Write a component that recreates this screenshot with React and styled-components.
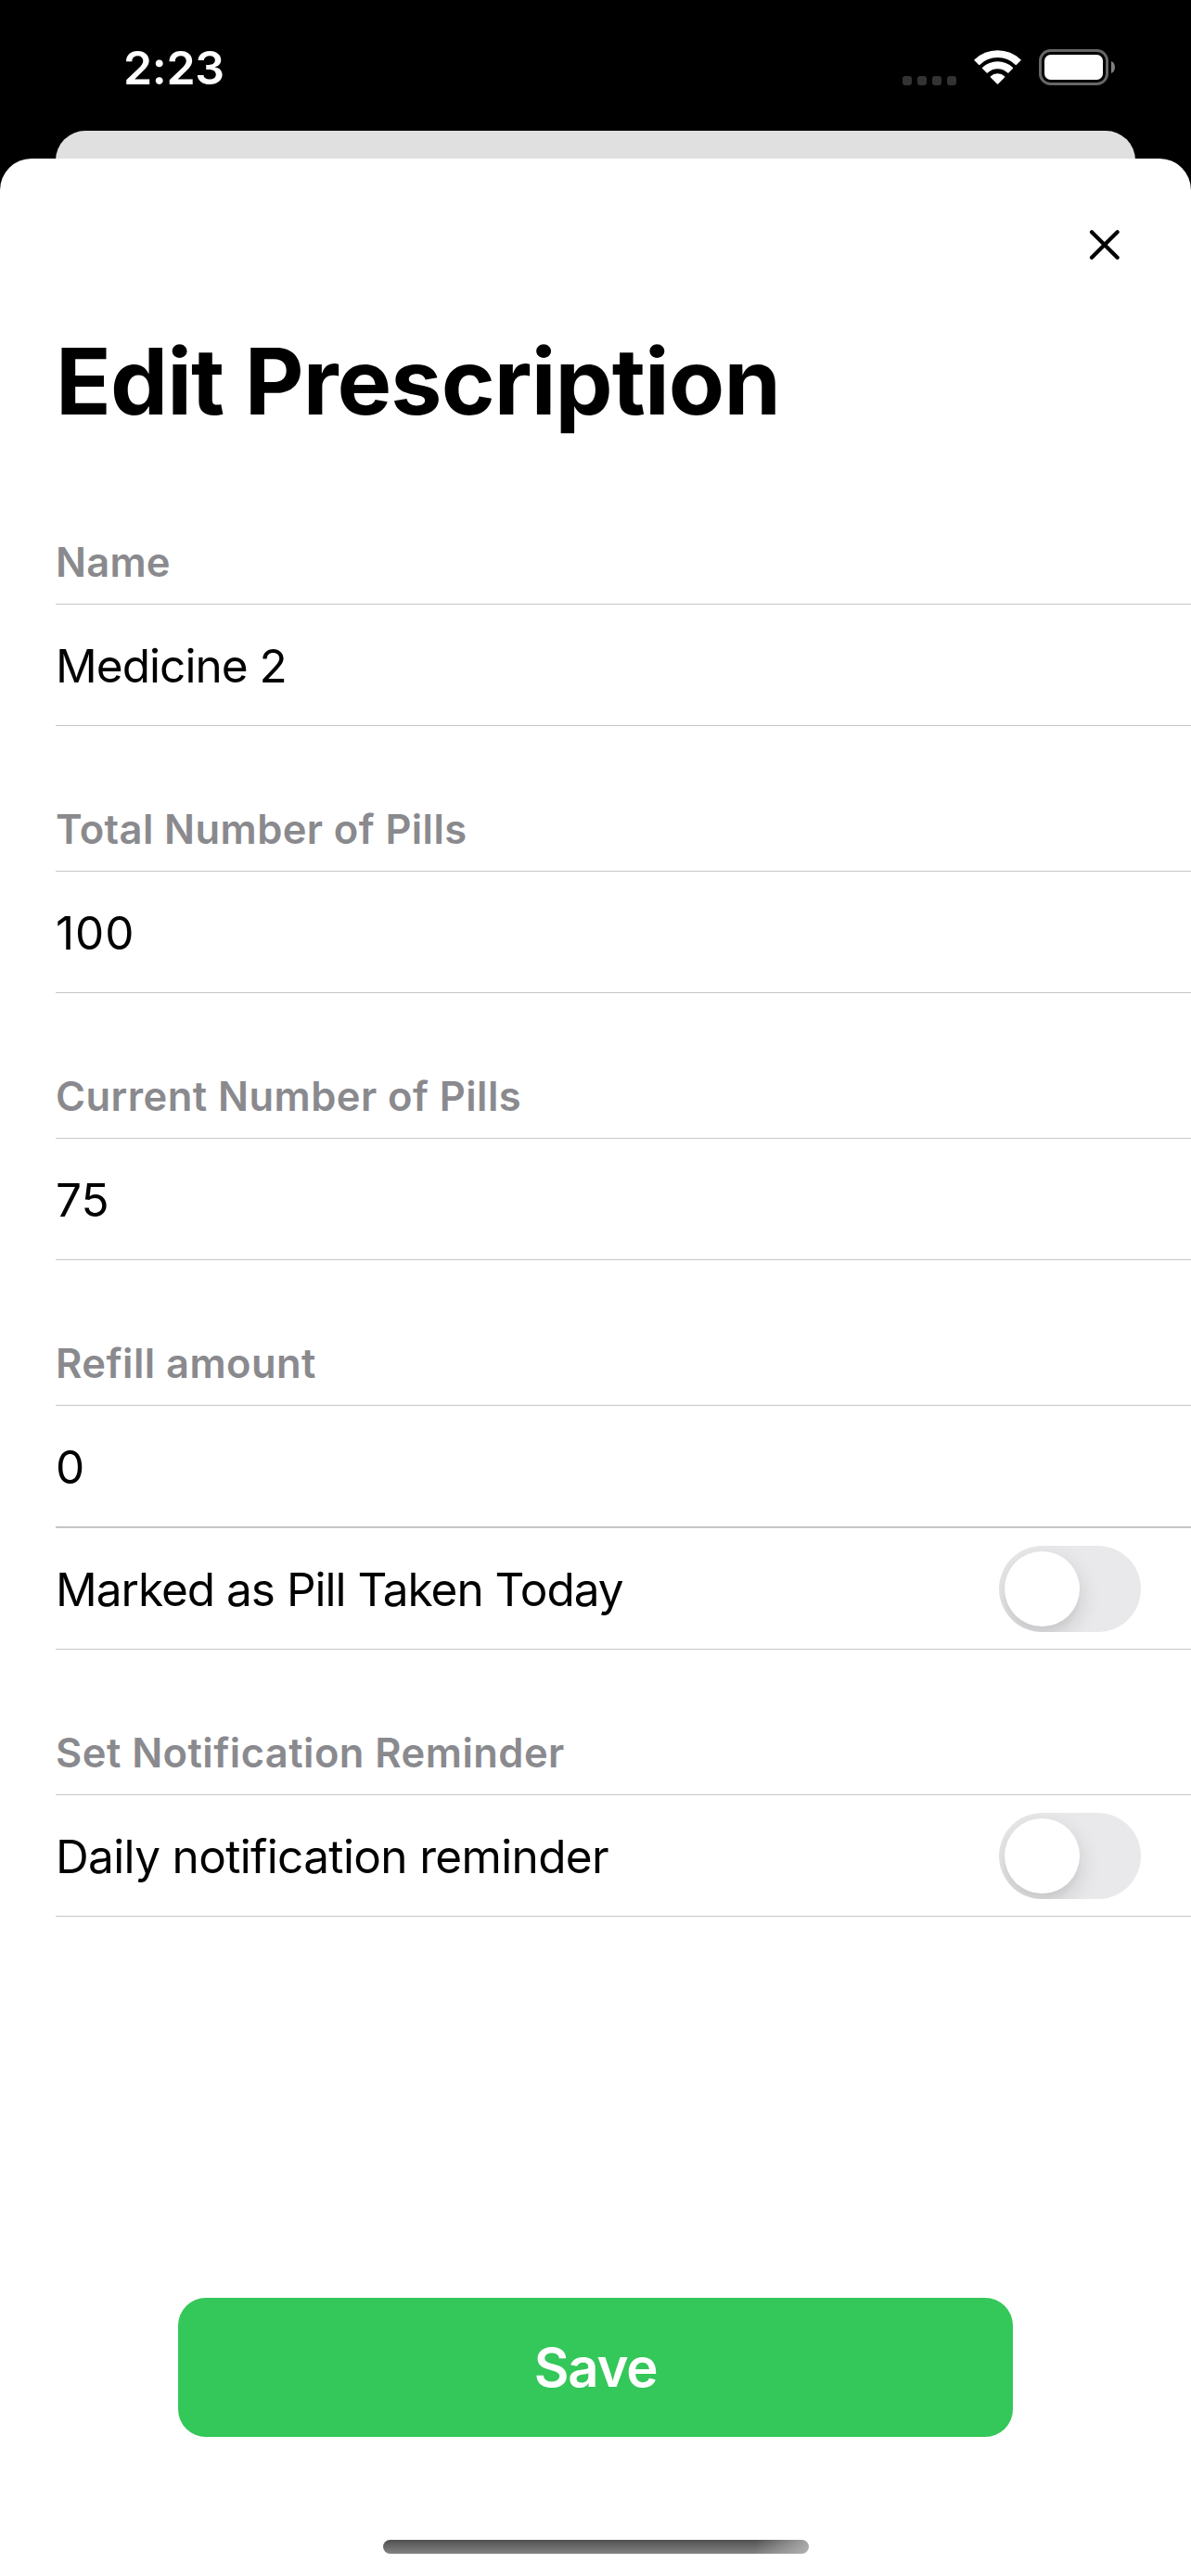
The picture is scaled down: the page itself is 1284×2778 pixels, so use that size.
import React from "react";
import styled, { createGlobalStyle } from "styled-components";

const GlobalStyle = createGlobalStyle`
  *, *::before, *::after { box-sizing: border-box; }
  body {
    margin: 0;
    background: #000;
    font-family: Inter, "Liberation Sans", sans-serif;
  }
`;

const Screen = styled.main`
  width: 1284px;
  height: 2778px;
  display: flex;
  flex-direction: column;
  overflow: hidden;
  background: #000;
`;

const StatusBar = styled.div`
  flex: none;
  height: 141px;
  padding: 4px 82px 0 133px;
  display: flex;
  align-items: center;
  justify-content: space-between;
`;

const Time = styled.span`
  color: #fff;
  font-size: 50px;
  font-weight: 580;
  line-height: 60px;
  letter-spacing: ${(p) => p.$tracking}px;
`;

const StatusIcons = styled.div`
  display: flex;
  align-items: center;
  gap: 19px;
  svg { display: block; }
`;

const Signal = styled.div`
  display: flex;
  gap: 6px;
  padding-top: 28px;
`;

const SignalDot = styled.i`
  width: 10px;
  height: 10px;
  border-radius: 3px;
  background: #333;
`;

const BackCard = styled.div`
  flex: none;
  height: 60px;
  margin: 0 60px -30px;
  border-radius: 32px 32px 0 0;
  background: #e0e0e0;
`;

const Sheet = styled.section`
  flex: 1;
  display: flex;
  flex-direction: column;
  border-radius: 34px 34px 0 0;
  background: #fff;
  z-index: 1;
`;

const SheetHeader = styled.header`
  height: 186px;
  padding-right: 69px;
  display: flex;
  align-items: center;
  justify-content: flex-end;
`;

const CloseButton = styled.button`
  width: 48px;
  height: 48px;
  padding: 0;
  border: 0;
  background: none;
  svg { display: block; }
`;

const Title = styled.h1`
  margin: 0 0 30px;
  padding-left: 60px;
  color: #000;
  font-size: 98.6px;
  font-weight: 700;
  line-height: 108px;
  letter-spacing: ${(p) => p.$tracking}px;
  white-space: nowrap;
`;

const Form = styled.div`
  flex: 1;
  padding-left: 60px;
  display: flex;
  flex-direction: column;
`;

const SectionLabel = styled.h2`
  height: 156px;
  margin: 0;
  padding: 66px 0 0;
  color: #8a8a8e;
  font-size: 43.5px;
  font-weight: 600;
  line-height: 90px;
  letter-spacing: ${(p) => p.$tracking}px;
  white-space: nowrap;
`;

const Row = styled.div`
  height: 132px;
  padding: 1px 54px 0 0;
  display: flex;
  align-items: center;
  justify-content: space-between;
  border: solid #c6c6c8;
  border-width: 1px 0;
`;

const RowText = styled.span`
  color: #000;
  font-size: 49.5px;
  font-weight: 400;
  line-height: 60px;
  letter-spacing: ${(p) => p.$tracking}px;
  white-space: nowrap;
`;

const Switch = styled.button`
  width: 153px;
  height: 93px;
  padding: 6px;
  display: flex;
  justify-content: ${(p) => (p.$on ? "flex-end" : "flex-start")};
  border: 0;
  border-radius: 47px;
  overflow: hidden;
  background: ${(p) => (p.$on ? "#34c759" : "#e9e9eb")};
`;

const Knob = styled.span`
  width: 81px;
  height: 81px;
  border-radius: 50%;
  background: #fff;
  box-shadow: 0 9px 24px rgba(0, 0, 0, 0.15), 0 9px 3px rgba(0, 0, 0, 0.02);
`;

const Footer = styled.footer`
  display: flex;
  flex-direction: column;
  align-items: center;
  gap: 111px;
  padding-bottom: 24px;
`;

const SaveButton = styled.button`
  width: 900px;
  height: 150px;
  padding: 0 0 1px;
  border: 0;
  border-radius: 30px;
  background: #34c759;
  color: #fff;
  font-family: inherit;
  font-size: 58px;
  font-weight: 580;
  letter-spacing: ${(p) => p.$tracking}px;
`;

const HomeIndicator = styled.div`
  width: 459px;
  height: 15px;
  margin-left: 1px;
  border-radius: 8px;
  background:
    linear-gradient(100deg, rgba(190, 190, 190, 0) 87%, rgba(190, 190, 190, 0.8) 100%),
    linear-gradient(#505050, #838383);
`;

const WifiIcon = () => (
  <svg width="51" height="39" viewBox="0.5 0 51 39" fill="#fff" stroke="#fff" strokeWidth="1.6" strokeLinejoin="round">
    <path d="M1.6 11.800A35.200 35.200 0 0 1 50.400 11.800L45.900 16.300A28.700 28.700 0 0 0 6.100 16.300Z" />
    <path d="M10.200 20.400A23 23 0 0 1 41.800 20.400L37.300 24.900A16.600 16.600 0 0 0 14.700 24.900Z" />
    <path d="M19 29.900A10.200 10.200 0 0 1 33 29.900L26 36.900Z" />
  </svg>
);

const BatteryIcon = () => (
  <svg width="82" height="39" viewBox="0 0 82 39">
    <rect x="1.5" y="1.5" width="72" height="36" rx="11" fill="none" stroke="#666" strokeWidth="3" />
    <rect x="6" y="6" width="63" height="27" rx="6.5" fill="#fff" />
    <path d="M78 13C83.300 15 83.300 24 78 26Z" fill="#808080" />
  </svg>
);

const CloseIcon = () => (
  <svg width="48" height="48" viewBox="0 0 48 48" fill="none" stroke="#000" strokeWidth="4.2" strokeLinecap="round">
    <path d="M10 10.200L37.600 37.800M37.600 10.200L10 37.800" />
  </svg>
);

const sections = [
  { label: "Name", tracking: 0.2, rows: [{ text: "Medicine 2", tracking: -0.95 }] },
  { label: "Total Number of Pills", tracking: 0.4, rows: [{ text: "100", tracking: 0.9 }] },
  { label: "Current Number of Pills", tracking: 0.45, rows: [{ text: "75", tracking: 0 }] },
  {
    label: "Refill amount",
    tracking: 0.45,
    rows: [
      { text: "0", tracking: 0 },
      { text: "Marked as Pill Taken Today", tracking: -1, toggle: true },
    ],
  },
  {
    label: "Set Notification Reminder",
    tracking: 0.45,
    rows: [{ text: "Daily notification reminder", tracking: -0.65, toggle: true }],
  },
];

export default function App() {
  return (
    <Screen>
      <GlobalStyle />
      <StatusBar>
        <Time $tracking={-0.3}>2:23</Time>
        <StatusIcons>
          <Signal>
            {[0, 1, 2, 3].map((i) => (
              <SignalDot key={i} />
            ))}
          </Signal>
          <WifiIcon />
          <BatteryIcon />
        </StatusIcons>
      </StatusBar>
      <BackCard />
      <Sheet>
        <SheetHeader>
          <CloseButton aria-label="Close">
            <CloseIcon />
          </CloseButton>
        </SheetHeader>
        <Title $tracking={-0.9}>Edit Prescription</Title>
        <Form>
          {sections.map((section) => (
            <React.Fragment key={section.label}>
              <SectionLabel $tracking={section.tracking}>{section.label}</SectionLabel>
              {section.rows.map((row) => (
                <Row key={row.text}>
                  <RowText $tracking={row.tracking}>{row.text}</RowText>
                  {row.toggle && (
                    <Switch role="switch" aria-checked="false" aria-label={row.text}>
                      <Knob />
                    </Switch>
                  )}
                </Row>
              ))}
            </React.Fragment>
          ))}
        </Form>
        <Footer>
          <SaveButton $tracking={-1.2}>Save</SaveButton>
          <HomeIndicator />
        </Footer>
      </Sheet>
    </Screen>
  );
}
